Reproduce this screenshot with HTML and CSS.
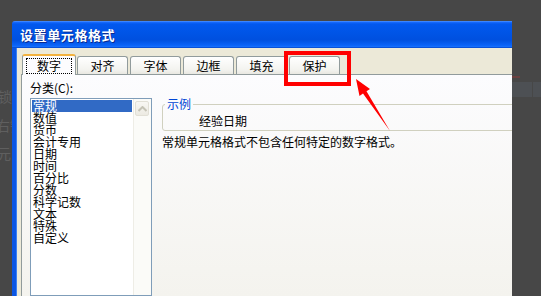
FILE: index.html
```html
<!DOCTYPE html>
<html lang="zh-CN">
<head>
<meta charset="utf-8">
<title>设置单元格格式</title>
<link rel="stylesheet" href="styles.css">
</head>
<body>
<div class="screen">
  <div class="bg-left">
    <span class="ghost g1">锁</span>
    <span class="ghost g2">右键</span>
    <span class="ghost g3">元</span>
  </div>

  <div class="dialog">
    <div class="titlebar"><span class="title">设置单元格格式</span></div>
    <div class="body">
      <div class="tabs">
        <div class="tab active"><span class="focus">数字</span></div>
        <div class="tab">对齐</div>
        <div class="tab">字体</div>
        <div class="tab">边框</div>
        <div class="tab">填充</div>
        <div class="tab">保护</div>
      </div>
      <div class="panel">
        <div class="left-col">
          <div class="label">分类(C):</div>
          <div class="listbox">
            <ul class="items">
              <li class="selected">常规</li>
              <li>数值</li>
              <li>货币</li>
              <li>会计专用</li>
              <li>日期</li>
              <li>时间</li>
              <li>百分比</li>
              <li>分数</li>
              <li>科学记数</li>
              <li>文本</li>
              <li>特殊</li>
              <li>自定义</li>
            </ul>
            <div class="scrollbar">
              <div class="sbtn">
                <svg width="9" height="6" viewBox="0 0 9 6"><path d="M0.5 5 L4.5 1 L8.5 5" fill="none" stroke="#c5c3b6" stroke-width="2"/></svg>
              </div>
            </div>
          </div>
        </div>
        <div class="right-col">
          <fieldset class="sample">
            <legend>示例</legend>
            <div class="sample-val">经验日期</div>
          </fieldset>
          <p class="desc">常规单元格格式不包含任何特定的数字格式。</p>
        </div>
      </div>
    </div>
  </div>

  <div class="bg-right">
    <div class="r-dash"></div>
    <div class="r-bar"><div class="r-cell"></div><div class="r-cell"></div></div>
  </div>

  <svg class="annot" width="541" height="296" viewBox="0 0 541 296">
    <rect x="286" y="53" width="63" height="31" fill="none" stroke="#ff0000" stroke-width="4"/>
    <polygon points="356,79 370,89 366.5,91.3 390,131 363,93.5 359.5,96" fill="#ff0000"/>
  </svg>
</div>
</body>
</html>
```

FILE: styles.css
```css
* { box-sizing: border-box; }

html, body {
  margin: 0;
  padding: 0;
  background: #474747;
}

body {
  font-family: "Noto Sans CJK SC", "Liberation Sans", sans-serif;
  font-size: 12px;
  color: #000;
}

.screen {
  position: relative;
  width: 541px;
  height: 296px;
  overflow: hidden;
  display: flex;
  background: #474747;
}

/* background behind dialog */
.bg-left {
  width: 12px;
  flex-shrink: 0;
  overflow: hidden;
  display: flex;
  flex-direction: column;
  color: #5f5f5f;
  font-size: 14px;
  line-height: 14px;
  white-space: nowrap;
}
.ghost { display: block; }
.g1 { margin: 89px 0 0 -2px; }
.g2 { margin: 15px 0 0 -4px; }
.g3 { margin: 14px 0 0 -3px; }

.bg-right {
  width: 29px;
  flex-shrink: 0;
  display: flex;
  flex-direction: column;
}
.r-dash {
  margin-top: 76px;
  width: 8px;
  height: 2px;
  background: #6a4040;
}
.r-bar {
  margin-top: 4px;
  height: 15px;
  display: flex;
  gap: 1px;
}
.r-cell {
  width: 20px;
  background: #4d5054;
}
.r-cell + .r-cell { width: 8px; }

/* dialog */
.dialog {
  width: 500px;
  flex-shrink: 0;
  margin-top: 21px;
  display: flex;
  flex-direction: column;
}

.titlebar {
  height: 27px;
  flex-shrink: 0;
  border-top-left-radius: 3px;
  background: linear-gradient(#5b9dff 0, #1a6cff 1px, #0258ee 3px, #0054e6 45%, #0050df 70%, #0a63f8 90%, #166ffc 95%, #0040c4 100%);
  display: flex;
  align-items: center;
  padding-left: 8px;
}
.title {
  color: #fff;
  font-weight: bold;
  font-size: 13px;
  letter-spacing: 0.6px;
  line-height: 14px;
  text-shadow: 1px 1px 0 #0a2a90;
}

.body {
  flex: 1;
  display: flex;
  flex-direction: column;
  background: #ece9d8;
  border-left: 4px solid #0a56e4;
  padding-left: 5px;
  box-shadow: inset 1px 0 0 #3c80f2;
}

.tabs {
  height: 27px;
  flex-shrink: 0;
  display: flex;
  align-items: flex-end;
  margin-bottom: -1px;
  padding-left: 1px;
}

.tab {
  width: 51px;
  height: 19px;
  margin-right: 2px;
  border: 1px solid #919b9c;
  border-bottom: none;
  border-radius: 3px 3px 0 0;
  background: linear-gradient(#ffffff, #f3f3ef 70%, #e6e5de);
  display: flex;
  align-items: center;
  justify-content: center;
  line-height: 12px;
  padding-bottom: 1px;
}

.tab.active {
  position: relative;
  z-index: 1;
  width: 54px;
  height: 21px;
  margin-right: 1px;
  border-top: 2px solid #f3b23e;
  background: #fcfcfe;
  padding-bottom: 0;
}
.focus {
  display: flex;
  align-items: center;
  justify-content: center;
  width: 46px;
  height: 16px;
  border: 1px dotted #000;
  margin-top: 1px;
}

.panel {
  flex: 1;
  display: flex;
  overflow: hidden;
  border-top: 1px solid #919b9c;
  border-left: 1px solid #919b9c;
  background: linear-gradient(#fcfcfe, #f4f3ee);
  padding-left: 8px;
}

.left-col {
  width: 122px;
  flex-shrink: 0;
  display: flex;
  flex-direction: column;
}

.label {
  margin-top: 7px;
  line-height: 12px;
  height: 12px;
  color: #000;
}

.listbox {
  margin-top: 4px;
  flex: 1;
  display: flex;
  border: 1px solid #7f9db9;
  background: #fff;
}

.items {
  list-style: none;
  margin: 0;
  padding: 1px;
  width: 103px;
}
.items li {
  height: 12px;
  line-height: 12px;
  padding-left: 1px;
  white-space: nowrap;
}
.items li.selected {
  background: #316ac5;
  color: #fff;
}

.scrollbar {
  flex: 1;
  border-left: 1px solid #eeede6;
  background: #fbfbf8;
  padding: 2px 2px 0 1px;
}
.sbtn {
  width: 14px;
  height: 15px;
  border: 1px solid #e2e0d6;
  border-radius: 2px;
  background: linear-gradient(#f8f7f3, #eceae2);
  display: flex;
  align-items: center;
  justify-content: center;
}

.right-col {
  margin-left: 10px;
  display: flex;
  flex-direction: column;
  padding-top: 23px;
}

.sample {
  width: 400px;
  margin: 0;
  padding: 5px 0 3px 0;
  border: 1px solid #d0d0bf;
  border-radius: 3px;
}
.sample legend {
  margin-left: 2px;
  padding: 0 2px;
  color: #0046d5;
  line-height: 12px;
}
.sample-val {
  line-height: 12px;
  height: 12px;
  padding-left: 36px;
}

.desc {
  margin: 5px 0 0 0;
  line-height: 12px;
  white-space: nowrap;
}

.annot {
  position: absolute;
  left: 0;
  top: 0;
  pointer-events: none;
}
```
